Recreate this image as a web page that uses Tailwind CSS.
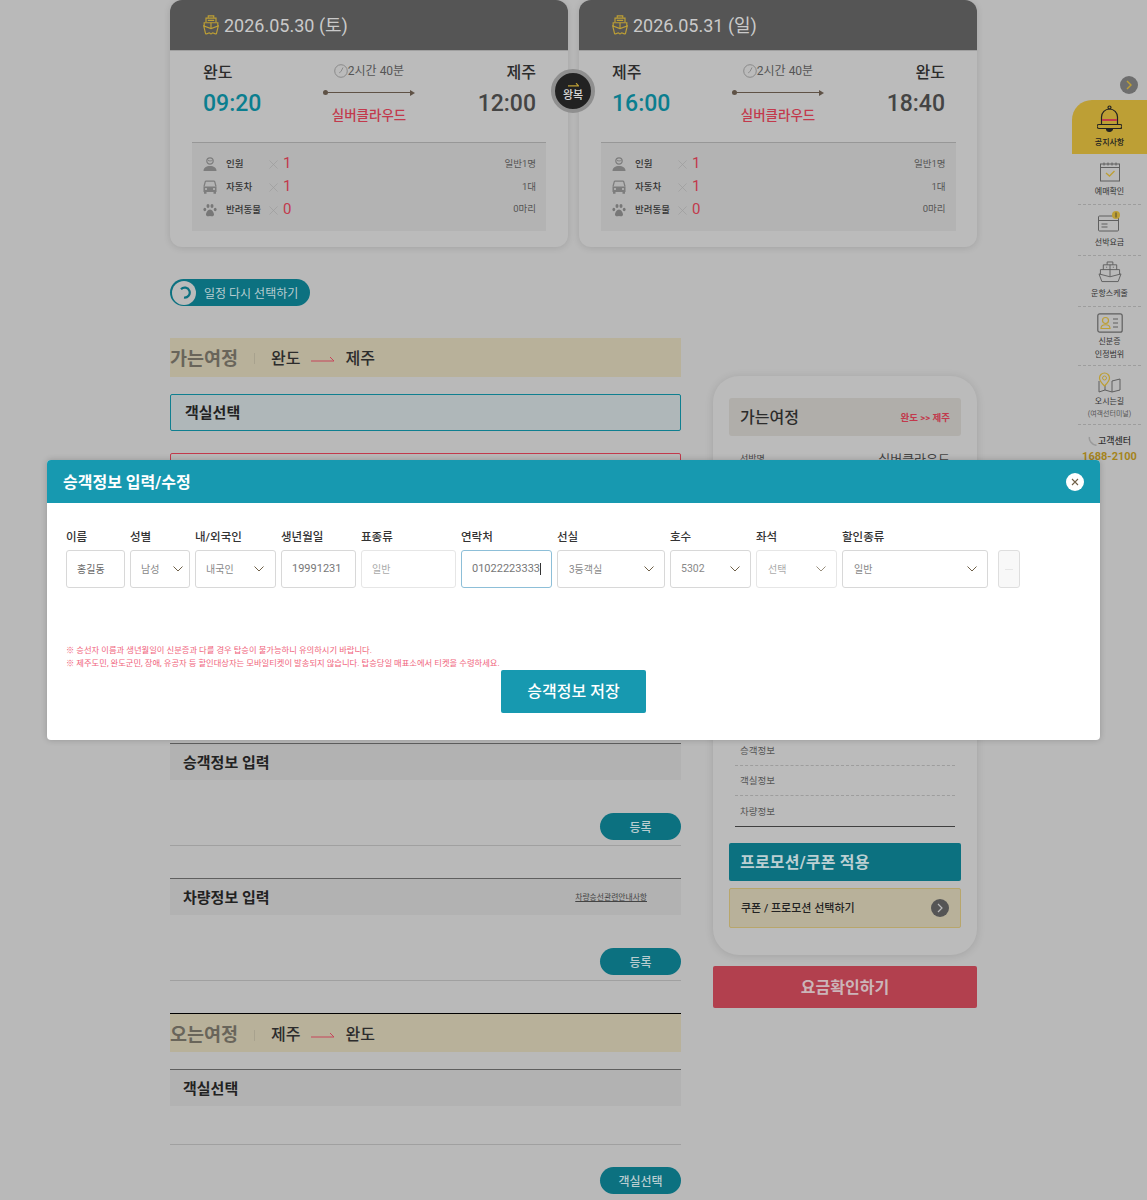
<!DOCTYPE html>
<html lang="ko">
<head>
<meta charset="utf-8">
<script src="https://cdn.jsdelivr.net/npm/@tailwindcss/browser@4"></script>
<title>승객정보 입력</title>
</head>
<body class="bg-[#b9b9b9] font-['Roboto','Noto_Sans_CJK_KR',sans-serif] text-[#222]">
<svg class="hidden" xmlns="http://www.w3.org/2000/svg">
  <defs>
    <symbol id="ship" viewBox="0 0 18 22"><g fill="none" stroke="#bd9f35" stroke-width="1.300"><path d="M6 3V1h6v2"/><path d="M3.500 8V3.500h11V8"/><path d="M1.500 12.500V8.500h15v4"/><path d="M1 12l2 8.500c2 .8 3-.8 4-.8s1 1.200 2 1.200 1-1.200 2-1.200 2 1.600 4 .8l2-8.500-8 3z"/><path d="M5.500 6h7M9 8.500V15"/></g></symbol>
    <symbol id="person" viewBox="0 0 14 14"><circle cx="7" cy="4" r="3.200" fill="none" stroke="#7d7d7d" stroke-width="1.200"/><path d="M5 3.500c1.500.6 3 .6 4.500-.2" stroke="#7d7d7d" fill="none"/><path d="M0.500 14c0-3.500 2.800-5 6.500-5s6.500 1.500 6.500 5z" fill="#7d7d7d"/></symbol>
    <symbol id="car" viewBox="0 0 14 14"><path d="M1 6.500l1.200-4.500c.1-.5.500-.8 1-.8h7.600c.5 0 .9.300 1 .8L13 6.500" fill="none" stroke="#7d7d7d" stroke-width="1.200"/><path d="M.5 6.500h13V12H.5z" fill="#7d7d7d"/><path d="M1 12h2.500v1.800H1zM10.500 12H13v1.800h-2.500z" fill="#7d7d7d"/><circle cx="3" cy="9" r="1" fill="#bbbbbb"/><circle cx="11" cy="9" r="1" fill="#bbbbbb"/></symbol>
    <symbol id="paw" viewBox="0 0 14 14"><g fill="#777"><ellipse cx="1.800" cy="6.500" rx="1.400" ry="1.800"/><ellipse cx="5" cy="3" rx="1.500" ry="2"/><ellipse cx="9" cy="3" rx="1.500" ry="2"/><ellipse cx="12.200" cy="6.500" rx="1.400" ry="1.800"/><path d="M7 6.500c2 0 4 3 4 5 0 2-2 2-4 1.400-2 .6-4 .6-4-1.400 0-2 2-5 4-5z"/></g></symbol>
    <symbol id="clock" viewBox="0 0 14 14"><g fill="none" stroke="#8a8a8a"><circle cx="7" cy="7" r="6.300"/><path d="M7 7.500l2-4"/><path d="M7 7.500l-2 1.500" stroke-width=".8"/></g></symbol>
    <symbol id="chev" viewBox="0 0 10 6"><path d="M.5.500 5 5l4.500-4.500" fill="none" stroke="#6f6048" stroke-width="1"/></symbol>
    <symbol id="longarrow" viewBox="0 0 24 6"><path d="M0 5h23L19 1" fill="none" stroke="#c7455a" stroke-width="1"/></symbol>
    <symbol id="cross" viewBox="0 0 9 9"><path d="M.5.500l8 8M8.500.500l-8 8" stroke="#9c9c9c" stroke-width=".7"/></symbol>
  </defs>
</svg>

<div class="relative w-[1147px] h-[1200px] overflow-hidden">
  <!-- main content -->
  <div class="w-[807px] ml-[170px]">
    <!-- schedule cards -->
    <div class="relative flex gap-[11px] h-[247px]">
      <section class="w-[398px] h-[247px] rounded-xl bg-[#bbbbbb] shadow-[0_1px_7px_rgba(0,0,0,0.12)] overflow-hidden">
        <div class="h-[51px] bg-[#555555] border-b border-[#a0a0a0] flex items-center pl-[32px] gap-[4px] text-[18px] text-[#c9c9c9]">
          <svg class="w-[18px] h-[20px]"><use href="#ship"/></svg><span>2026.05.30 (토)</span>
        </div>
        <div class="grid grid-cols-[1fr_auto_1fr] px-[33px] h-[91px]">
          <div class="pt-[11px]"><div class="text-[16px] leading-[22px] font-medium text-[#2c2c2c]">완도</div><div class="text-[23px] leading-[40px] text-[#0b7e8f] font-medium">09:20</div></div>
          <div class="flex flex-col items-center pt-[11px]">
            <div class="flex items-center text-[12px] leading-[18px] text-[#555]"><svg class="w-[14px] h-[14px]"><use href="#clock"/></svg>2시간 40분</div>
            <div class="relative w-[92px] h-[5px] mt-[10px] flex items-center"><span class="w-[5px] h-[5px] rounded-full bg-[#5f5246]"></span><span class="flex-1 h-px bg-[#5f5246]"></span><span class="w-0 h-0 border-y-[3px] border-y-transparent border-l-[5px] border-l-[#5f5246]"></span></div>
            <div class="mt-[10px] text-[13.500px] leading-[20px] font-medium text-[#c2394c]">실버클라우드</div>
          </div>
          <div class="pt-[11px] text-right -mr-[1px]"><div class="text-[16px] leading-[22px] font-medium text-[#2c2c2c]">제주</div><div class="text-[23px] leading-[40px] text-[#444] font-medium">12:00</div></div>
        </div>
        <div class="mx-[22px] h-[89px] bg-[#b3b3b3] border-t border-[#979797] pl-[11px] pr-[10px] pt-[9px] text-[9.500px]">
          <div class="flex items-center h-[23px]"><svg class="w-[14px] h-[14px]"><use href="#person"/></svg><span class="w-[43px] ml-[9px] pt-[2px] font-medium text-[#333]">인원</span><svg class="w-[9px] h-[9px] mt-[2px]"><use href="#cross"/></svg><span class="ml-[5px] text-[15px] text-[#c2394c]">1</span><span class="ml-auto pt-[2px] text-[#555]">일반1명</span></div>
          <div class="flex items-center h-[23px]"><svg class="w-[14px] h-[14px]"><use href="#car"/></svg><span class="w-[43px] ml-[9px] pt-[2px] font-medium text-[#333]">자동차</span><svg class="w-[9px] h-[9px] mt-[2px]"><use href="#cross"/></svg><span class="ml-[5px] text-[15px] text-[#c2394c]">1</span><span class="ml-auto pt-[2px] text-[#555]">1대</span></div>
          <div class="flex items-center h-[23px]"><svg class="w-[14px] h-[14px]"><use href="#paw"/></svg><span class="w-[43px] ml-[9px] pt-[2px] font-medium text-[#333]">반려동물</span><svg class="w-[9px] h-[9px] mt-[2px]"><use href="#cross"/></svg><span class="ml-[5px] text-[15px] text-[#c2394c]">0</span><span class="ml-auto text-[#555]">0마리</span></div>
        </div>
      </section>
      <section class="w-[398px] h-[247px] rounded-xl bg-[#bbbbbb] shadow-[0_1px_7px_rgba(0,0,0,0.12)] overflow-hidden">
        <div class="h-[51px] bg-[#555555] border-b border-[#a0a0a0] flex items-center pl-[32px] gap-[4px] text-[18px] text-[#c9c9c9]">
          <svg class="w-[18px] h-[20px]"><use href="#ship"/></svg><span>2026.05.31 (일)</span>
        </div>
        <div class="grid grid-cols-[1fr_auto_1fr] px-[33px] h-[91px]">
          <div class="pt-[11px]"><div class="text-[16px] leading-[22px] font-medium text-[#2c2c2c]">제주</div><div class="text-[23px] leading-[40px] text-[#0b7e8f] font-medium">16:00</div></div>
          <div class="flex flex-col items-center pt-[11px]">
            <div class="flex items-center text-[12px] leading-[18px] text-[#555]"><svg class="w-[14px] h-[14px]"><use href="#clock"/></svg>2시간 40분</div>
            <div class="relative w-[92px] h-[5px] mt-[10px] flex items-center"><span class="w-[5px] h-[5px] rounded-full bg-[#5f5246]"></span><span class="flex-1 h-px bg-[#5f5246]"></span><span class="w-0 h-0 border-y-[3px] border-y-transparent border-l-[5px] border-l-[#5f5246]"></span></div>
            <div class="mt-[10px] text-[13.500px] leading-[20px] font-medium text-[#c2394c]">실버클라우드</div>
          </div>
          <div class="pt-[11px] text-right -mr-[1px]"><div class="text-[16px] leading-[22px] font-medium text-[#2c2c2c]">완도</div><div class="text-[23px] leading-[40px] text-[#444] font-medium">18:40</div></div>
        </div>
        <div class="mx-[21.500px] h-[89px] bg-[#b3b3b3] border-t border-[#979797] pl-[11.500px] pr-[10px] pt-[9px] text-[9.500px]">
          <div class="flex items-center h-[23px]"><svg class="w-[14px] h-[14px]"><use href="#person"/></svg><span class="w-[43px] ml-[9px] pt-[2px] font-medium text-[#333]">인원</span><svg class="w-[9px] h-[9px] mt-[2px]"><use href="#cross"/></svg><span class="ml-[5px] text-[15px] text-[#c2394c]">1</span><span class="ml-auto pt-[2px] text-[#555]">일반1명</span></div>
          <div class="flex items-center h-[23px]"><svg class="w-[14px] h-[14px]"><use href="#car"/></svg><span class="w-[43px] ml-[9px] pt-[2px] font-medium text-[#333]">자동차</span><svg class="w-[9px] h-[9px] mt-[2px]"><use href="#cross"/></svg><span class="ml-[5px] text-[15px] text-[#c2394c]">1</span><span class="ml-auto pt-[2px] text-[#555]">1대</span></div>
          <div class="flex items-center h-[23px]"><svg class="w-[14px] h-[14px]"><use href="#paw"/></svg><span class="w-[43px] ml-[9px] pt-[2px] font-medium text-[#333]">반려동물</span><svg class="w-[9px] h-[9px] mt-[2px]"><use href="#cross"/></svg><span class="ml-[5px] text-[15px] text-[#c2394c]">0</span><span class="ml-auto text-[#555]">0마리</span></div>
        </div>
      </section>
      <!-- round trip badge -->
      <div class="absolute left-[381px] top-[69px] w-[44px] h-[44px] pt-[3px] rounded-full bg-[#222] border-[4px] border-[#8f8f8f] flex flex-col items-center justify-center text-[#d8d8d8]">
        <svg class="w-[11px] h-[4px] mb-[3px]" viewBox="0 0 11 4"><path d="M0 2.800h10.500L8 .2" fill="none" stroke="#bd9f35" stroke-width="1.200"/></svg>
        <span class="text-[11px] leading-[12px] font-medium">왕복</span>
      </div>
    </div>

    <div class="flex gap-[32px]">
      <!-- left column -->
      <div class="w-[511px]">
        <button class="mt-[32px] w-[140px] h-[27px] pt-[2px] rounded-full bg-[#0c7180] flex items-center pl-[2px] text-[12px] text-[#b9cdd0]">
          <span class="w-[24px] h-[24px] -mt-[2px] rounded-full bg-[#bbbbbb] flex items-center justify-center mr-[8px]"><svg class="w-[13px] h-[13px]" viewBox="0 0 13 13"><path d="M3 3.200A5 5 0 1 1 6 11.500" fill="none" stroke="#0c7180" stroke-width="2.200"/></svg></span>일정 다시 선택하기
        </button>
        <div class="mt-[32px] h-[39px] pt-[2px] bg-[#b8b19a] flex items-center text-[16px] font-medium text-[#2c2c2c]">
          <span class="pt-[2px] text-[18.500px] font-bold text-[#69655a] w-[84px]">가는여정</span><span class="w-px h-[11px] bg-[#a8a28e] mr-[16px]"></span>완도<svg class="w-[24px] h-[6px] mx-[11px] mr-[10px]"><use href="#longarrow"/></svg>제주
        </div>
        <div class="mt-[17px] h-[37px] pt-[2px] rounded-[2px] bg-[#afb7b9] border border-[#0f7f90] flex items-center pl-[14px] text-[15px] font-bold">객실선택</div>
        <div class="mt-[22px] h-[100px] rounded-[2px] border border-[#c2394c]"></div>
        <div class="mt-[190px] h-[37px] pt-[2px] bg-[#b2b2b2] border-t border-[#5f5f5f] flex items-center pl-[13px] text-[15px] font-bold">승객정보 입력</div>
        <div class="h-[66px] border-b border-[#a0a0a0]"></div>
        <div class="flex justify-end -mt-[33px] h-[27px] relative"><button class="w-[81px] h-[27px] pt-[2px] rounded-full bg-[#0c7180] text-[12px] font-medium text-[#b9cdd0]">등록</button></div>
        <div class="mt-[38px] h-[37px] pt-[2px] bg-[#b2b2b2] border-t border-[#5f5f5f] flex items-center pl-[13px] pr-[34px] text-[15px] font-bold">차량정보 입력<a class="ml-auto text-[7.800px] font-normal underline text-[#444]">차량승선관련안내사항</a></div>
        <div class="h-[66px] border-b border-[#a0a0a0]"></div>
        <div class="flex justify-end -mt-[33px] h-[27px] relative"><button class="w-[81px] h-[27px] pt-[2px] rounded-full bg-[#0c7180] text-[12px] font-medium text-[#b9cdd0]">등록</button></div>
        <div class="mt-[38px] h-[39px] pt-[4px] bg-[#b8b19a] border-t border-black flex items-center text-[16px] font-medium text-[#2c2c2c]">
          <span class="pt-[2px] text-[18.500px] font-bold text-[#69655a] w-[84px]">오는여정</span><span class="w-px h-[11px] bg-[#a8a28e] mr-[16px]"></span>제주<svg class="w-[24px] h-[6px] mx-[11px] mr-[10px]"><use href="#longarrow"/></svg>완도
        </div>
        <div class="mt-[17px] h-[37px] pt-[2px] bg-[#b2b2b2] border-t border-[#5f5f5f] flex items-center pl-[13px] text-[15px] font-bold">객실선택</div>
        <div class="h-[39px] border-b border-[#a0a0a0]"></div>
        <div class="flex justify-end mt-[22px]"><button class="w-[81px] h-[27px] pt-[2px] rounded-full bg-[#0c7180] text-[12px] font-medium text-[#b9cdd0]">객실선택</button></div>
      </div>

      <!-- right column -->
      <aside class="w-[264px] pt-[129px]">
        <div class="h-[579px] rounded-[26px] bg-[#bbbbbb] shadow-[0_1px_9px_rgba(0,0,0,0.12)] px-[16px] pt-[22px]">
          <div class="h-[38px] pt-[2px] rounded-[3px] bg-[#b0aeaa] flex items-center justify-between pl-[11px] pr-[11px]"><span class="text-[16px] font-medium text-[#2c2c2c]">가는여정</span><span class="text-[9.500px] font-bold text-[#c2394c]">완도 &gt;&gt; 제주</span></div>
          <div class="flex items-center justify-between px-[11px] mt-[14px] h-[20px] text-[#444]"><span class="text-[9px]">선박명</span><span class="text-[13px]">실버클라우드</span></div>
          <div class="h-[265px]"></div>
          <div class="px-[6px] text-[9.500px] text-[#555]">
            <div class="h-[31px] pl-[5px] pt-[2px] flex items-center border-b border-dashed border-[#9d9d9d]">승객정보</div>
            <div class="h-[30px] pl-[5px] pt-[2px] flex items-center border-b border-dashed border-[#9d9d9d]">객실정보</div>
            <div class="h-[31px] pl-[5px] pt-[2px] flex items-center border-b border-[#3f3f3f]">차량정보</div>
          </div>
          <div class="mt-[16px] h-[38px] pt-[2px] rounded-[2px] bg-[#0c7180] flex items-center pl-[11px] text-[16px] font-bold tracking-[0.2px] text-[#bccfd2]">프로모션/쿠폰 적용</div>
          <div class="mt-[7px] h-[40px] rounded-[2px] bg-[#b8b19a] border border-[#b8a66b] flex items-center justify-between pl-[11px] pr-[11px] text-[11px] font-medium text-[#222]"><span class="pt-[3px]">쿠폰 / 프로모션 선택하기</span><span class="w-[18px] h-[18px] rounded-full bg-[#555] flex items-center justify-center"><svg class="w-[6px] h-[10px]" viewBox="0 0 6 10"><path d="M1 1l4 4-4 4" fill="none" stroke="#bbbbbb" stroke-width="1.200"/></svg></span></div>
        </div>
        <button class="mt-[11px] w-full h-[42px] pt-[2px] rounded-[2px] bg-[#b2404e] text-[16px] font-bold text-[#cbb5b9]">요금확인하기</button>
      </aside>
    </div>
  </div>

  <!-- floating quick menu -->
  <nav class="absolute left-[1072px] top-[76px] w-[75px] h-[400px] text-center text-[8px] leading-[13px] text-[#333]">
    <span class="absolute left-[48px] top-0 w-[18px] h-[18px] rounded-full bg-[#6e6e6e] flex items-center justify-center"><svg class="w-[6px] h-[10px]" viewBox="0 0 6 10"><path d="M1 1l4 4-4 4" fill="none" stroke="#bd9f35" stroke-width="1.500"/></svg></span>
    <div class="mt-[24px] h-[54px] rounded-tl-[20px] bg-[#bd9f35] flex flex-col items-center pt-[5px]">
      <svg class="w-[25px] h-[28px]" viewBox="0 0 25 28"><g fill="none" stroke="#222" stroke-width="1.200"><circle cx="12.500" cy="2.500" r="1.500"/><path d="M4.500 19.500V12a8 8 0 0 1 16 0v7.500"/><path d="M2 19.500h21a2 2 0 0 1 0 4H2a2 2 0 0 1 0-4z"/><path d="M9.500 23.500a3 3 0 0 0 6 0" fill="#222"/></g><rect x="5" y="14" width="15" height="2" fill="#c2394c"/></svg>
      <span class="mt-[3px] font-medium text-[#222]">공지사항</span>
    </div>
    <div class="mx-[6px] h-[51px] border-b border-dashed border-[#9d9d9d] flex flex-col items-center pt-[8px]">
      <svg class="w-[22px] h-[20px]" viewBox="0 0 22 20"><g fill="none" stroke="#5f5f5f"><rect x="1.500" y="2" width="19" height="17"/><path d="M1.500 5.500h19"/><path d="M5 .5v3M9 .5v3M13 .5v3M17 .5v3"/></g><path d="M7 11l3.500 3 5-5" fill="none" stroke="#bd9f35" stroke-width="1.300"/></svg>
      <span class="mt-[3px]">예매확인</span>
    </div>
    <div class="mx-[6px] h-[51px] border-b border-dashed border-[#9d9d9d] flex flex-col items-center pt-[6px]">
      <svg class="w-[23px] h-[21px]" viewBox="0 0 23 21"><g fill="none" stroke="#5f5f5f"><rect x=".5" y="5" width="20" height="15" rx="1"/><path d="M.5 9.500h20M3.500 13h6M3.500 16h6"/></g><circle cx="18" cy="4" r="4" fill="#bd9f35"/><path d="M18 1.500v5" stroke="#333" stroke-width=".8"/></svg>
      <span class="mt-[4px]">선박요금</span>
    </div>
    <div class="mx-[6px] h-[51px] border-b border-dashed border-[#9d9d9d] flex flex-col items-center pt-[5px]">
      <svg class="w-[24px] h-[22px]" viewBox="0 0 24 23"><g fill="none" stroke="#5f5f5f"><path d="M9 4V1h6v3"/><path d="M5 9V4h14v5"/><path d="M2 14V9h20v5"/><path d="M.5 13.500l3 8h17l3-8-11.500 3z"/><path d="M12 4v12M8 6.500h1M15 6.500h1"/></g></svg>
      <span class="mt-[4px]">운항스케줄</span>
    </div>
    <div class="mx-[6px] h-[59px] border-b border-dashed border-[#9d9d9d] flex flex-col items-center pt-[6px]">
      <svg class="w-[26px] h-[20px]" viewBox="0 0 26 20"><rect x=".8" y=".8" width="24.400" height="18.400" rx="2" fill="none" stroke="#5f5f5f" stroke-width="1.200"/><circle cx="8.500" cy="7.500" r="3" fill="none" stroke="#bd9f35" stroke-width="1.200"/><path d="M4 15.500c0-5 9-5 9 0z" fill="none" stroke="#bd9f35" stroke-width="1.200"/><path d="M16 6h5M16 10h5M16 14h5" stroke="#5f5f5f"/></svg>
      <span class="mt-[2px] leading-[13px]">신분증<br>인정범위</span>
    </div>
    <div class="mx-[6px] h-[59px] border-b border-dashed border-[#9d9d9d] flex flex-col items-center pt-[6px]">
      <svg class="w-[23px] h-[21px]" viewBox="0 0 23 21"><path d="M1 9v11l6-2 7 2 8-2V7l-8 2" fill="none" stroke="#5f5f5f"/><path d="M14 9v11M7 13v5" stroke="#5f5f5f"/><path d="M6.500 1A5 5 0 0 0 1.500 6c0 3 5 8 5 8s5-5 5-8a5 5 0 0 0-5-5z" fill="#b9b9b9" stroke="#bd9f35" stroke-width="1.200"/><circle cx="6.500" cy="6" r="2" fill="none" stroke="#bd9f35"/></svg>
      <span class="mt-[2px]">오시는길</span>
      <span class="text-[7px] leading-[12px] text-[#555]">(여객선터미널)</span>
    </div>
    <div class="pt-[9px] flex items-center justify-center text-[9px] leading-[14px] font-medium"><svg class="w-[10px] h-[10px]" viewBox="0 0 10 10"><path d="M1.500 1C.5 4 4 9 8.500 9.300" fill="none" stroke="#9a9a9a" stroke-width="1.500"/></svg>고객센터</div>
    <div class="mt-[1px] text-[11px] leading-[16px] font-bold text-[#a5841c]">1688-2100</div>
  </nav>

  <!-- modal -->
  <div role="dialog" class="absolute left-[47px] top-[460px] w-[1053px] h-[280px] rounded-[4px] bg-white shadow-[0_0_6px_rgba(0,0,0,0.2)] overflow-hidden">
    <header class="h-[43px] bg-[#1799b0] flex items-center justify-between pl-[16px] pr-[16px]">
      <h2 class="pt-[2px] text-[16px] font-bold text-white">승객정보 입력/수정</h2>
      <span class="w-[18px] h-[18px] rounded-full bg-white flex items-center justify-center"><svg class="w-[8px] h-[8px]" viewBox="0 0 8 8"><path d="M1 1l6 6M7 1L1 7" stroke="#6f6048" stroke-width="1.100"/></svg></span>
    </header>
    <div class="flex items-start pl-[19px] pt-[26px] gap-[5px]">
      <div class="w-[59px]"><div class="text-[11.500px] leading-[17px] mb-[4px] font-medium text-[#333]">이름</div><div class="h-[38px] rounded-[3px] border border-[#d8d8d8] flex items-center pl-[10px] text-[10px] text-[#666]">홍길동</div></div>
      <div class="w-[60px]"><div class="text-[11.500px] leading-[17px] mb-[4px] font-medium text-[#333]">성별</div><div class="h-[38px] rounded-[3px] border border-[#d8d8d8] flex items-center justify-between pl-[10px] pr-[6.500px] text-[10px] text-[#888]">남성<svg class="w-[10px] h-[6px]"><use href="#chev"/></svg></div></div>
      <div class="w-[81px]"><div class="text-[11.500px] leading-[17px] mb-[4px] font-medium text-[#333]">내/외국인</div><div class="h-[38px] rounded-[3px] border border-[#d8d8d8] flex items-center justify-between pl-[10px] pr-[11px] text-[10px] text-[#888]">내국인<svg class="w-[10px] h-[6px]"><use href="#chev"/></svg></div></div>
      <div class="w-[75px]"><div class="text-[11.500px] leading-[17px] mb-[4px] font-medium text-[#333]">생년월일</div><div class="h-[38px] rounded-[3px] border border-[#d8d8d8] flex items-center pl-[10px] text-[11px] text-[#777]">19991231</div></div>
      <div class="w-[95px]"><div class="text-[11.500px] leading-[17px] mb-[4px] font-medium text-[#333]">표종류</div><div class="h-[38px] rounded-[3px] border border-[#e6e6e6] flex items-center pl-[10px] text-[10px] text-[#aaa]">일반</div></div>
      <div class="w-[91px]"><div class="text-[11.500px] leading-[17px] mb-[4px] font-medium text-[#333]">연락처</div><div class="h-[38px] rounded-[3px] border border-[#8dbfd8] flex items-center pl-[10px] text-[11px] text-[#777]">01022223333<span class="w-px h-[12px] bg-[#333]"></span></div></div>
      <div class="w-[108px]"><div class="text-[11.500px] leading-[17px] mb-[4px] font-medium text-[#333]">선실</div><div class="h-[38px] rounded-[3px] border border-[#d8d8d8] flex items-center justify-between pl-[11px] pr-[10px] text-[10px] text-[#888]">3등객실<svg class="w-[10px] h-[6px]"><use href="#chev"/></svg></div></div>
      <div class="w-[81px]"><div class="text-[11.500px] leading-[17px] mb-[4px] font-medium text-[#333]">호수</div><div class="h-[38px] rounded-[3px] border border-[#d8d8d8] flex items-center justify-between pl-[10px] pr-[10px] text-[10.500px] text-[#888]">5302<svg class="w-[10px] h-[6px]"><use href="#chev"/></svg></div></div>
      <div class="w-[81px]"><div class="text-[11.500px] leading-[17px] mb-[4px] font-medium text-[#333]">좌석</div><div class="h-[38px] rounded-[3px] border border-[#e6e6e6] flex items-center justify-between pl-[11px] pr-[10px] text-[10px] text-[#aaa]">선택<svg class="w-[10px] h-[6px] opacity-70"><use href="#chev"/></svg></div></div>
      <div class="w-[146px]"><div class="text-[11.500px] leading-[17px] mb-[4px] font-medium text-[#333]">할인종류</div><div class="h-[38px] rounded-[3px] border border-[#d8d8d8] flex items-center justify-between pl-[11px] pr-[10px] text-[10px] text-[#888]">일반<svg class="w-[10px] h-[6px]"><use href="#chev"/></svg></div></div>
      <div class="w-[22px] ml-[5px] pt-[21px]"><div class="h-[38px] rounded-[3px] border border-[#dedede] bg-[#f8f8f8] flex items-center justify-center"><span class="w-[8px] h-px bg-[#e6e6e6]"></span></div></div>
    </div>
    <div class="mt-[56px] pl-[19px] text-[8.300px] leading-[12.500px] text-[#f0647c]">
      <p>※ 승선자 이름과 생년월일이 신분증과 다를 경우 탑승이 불가능하니 유의하시기 바랍니다.</p>
      <p>※ 제주도민, 완도군민, 장애, 유공자 등 할인대상자는 모바일티켓이 발송되지 않습니다. 탑승당일 매표소에서 티켓을 수령하세요.</p>
    </div>
    <div class="mt-[1px] flex justify-center"><button class="w-[145px] h-[43px] pt-[1px] rounded-[2px] bg-[#1799b0] text-[16px] text-white font-medium">승객정보 저장</button></div>
  </div>
</div>
</body>
</html>
